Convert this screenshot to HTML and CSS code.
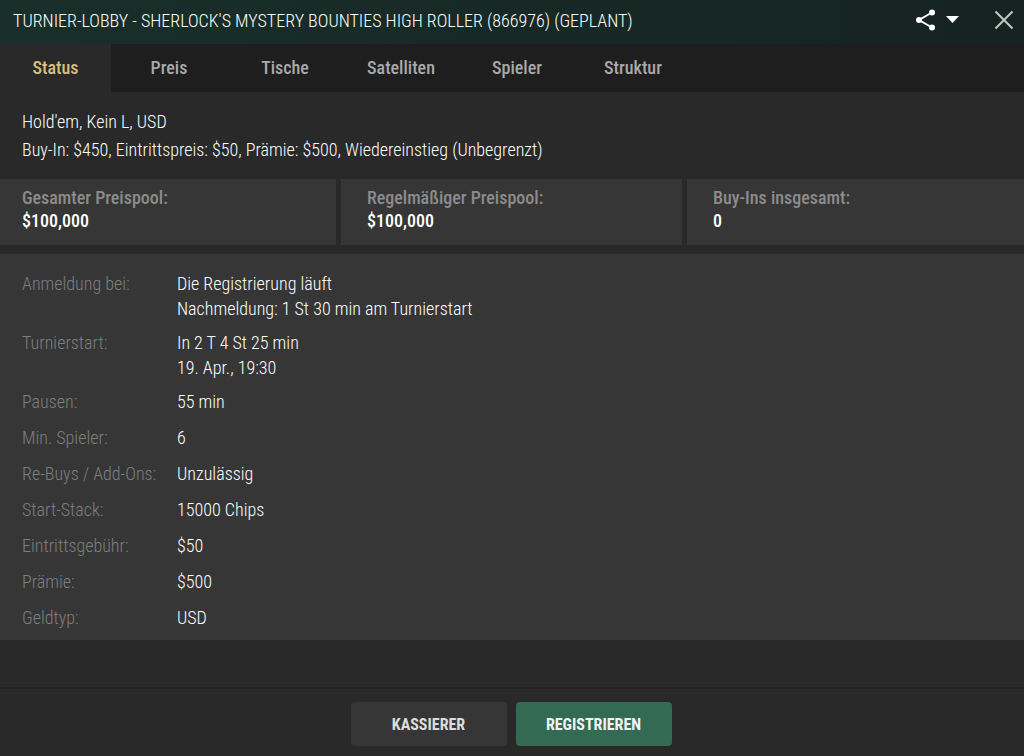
FILE: index.html
```
<!DOCTYPE html>
<html lang="de">
<head>
    <meta charset="UTF-8">
    <meta name="viewport" content="width=device-width, initial-scale=1">
    <title>Turnier-Lobby</title>
    <link rel="stylesheet" href="styles.css">
</head>

<body>

<div class="lobby">
    <header class="titlebar">
        <h1>TURNIER-LOBBY - SHERLOCK'S MYSTERY BOUNTIES HIGH ROLLER (866976) (GEPLANT)</h1>
        <button class="share" type="button" aria-label="Teilen">
            <svg width="44" height="22" viewBox="0 0 44 22">
                <path d="M17 3.5L4 11l13 7.5" fill="none" stroke="#fff" stroke-width="2"/>
                <circle cx="17" cy="3.500" r="3" fill="#fff"/>
                <circle cx="4" cy="11" r="3" fill="#fff"/>
                <circle cx="17" cy="18.500" r="3" fill="#fff"/>
                <path d="M31 7h13l-6.500 7z" fill="#fff"/>
            </svg>
        </button>
        <button class="close" type="button" aria-label="Schließen">
            <svg width="20" height="20" viewBox="0 0 20 20">
                <path d="M1.500 1.500l17 17M18.500 1.500l-17 17" fill="none" stroke="#c3c8c6" stroke-width="2"/>
            </svg>
        </button>
    </header>

    <nav class="tabs">
        <a class="current" href="#status">Status</a>
        <a href="#preis">Preis</a>
        <a href="#tische">Tische</a>
        <a href="#satelliten">Satelliten</a>
        <a href="#spieler">Spieler</a>
        <a href="#struktur">Struktur</a>
    </nav>

    <main id="status">
        <div class="summary">
            <p>Hold'em, Kein L, USD</p>
            <p>Buy-In: $450, Eintrittspreis: $50, Prämie: $500, Wiedereinstieg (Unbegrenzt)</p>
        </div>

        <div class="pools">
            <div class="pool">
                <h2>Gesamter Preispool:</h2>
                <strong>$100,000</strong>
            </div>
            <div class="pool">
                <h2>Regelmäßiger Preispool:</h2>
                <strong>$100,000</strong>
            </div>
            <div class="pool">
                <h2>Buy-Ins insgesamt:</h2>
                <strong>0</strong>
            </div>
        </div>

        <dl class="details">
            <div><dt>Anmeldung bei:</dt><dd>Die Registrierung läuft<br>Nachmeldung: 1 St 30 min am Turnierstart</dd></div>
            <div><dt>Turnierstart:</dt><dd>In 2 T 4 St 25 min<br>19. Apr., 19:30</dd></div>
            <div><dt>Pausen:</dt><dd>55 min</dd></div>
            <div><dt>Min. Spieler:</dt><dd>6</dd></div>
            <div><dt>Re-Buys / Add-Ons:</dt><dd>Unzulässig</dd></div>
            <div><dt>Start-Stack:</dt><dd>15000 Chips</dd></div>
            <div><dt>Eintrittsgebühr:</dt><dd>$50</dd></div>
            <div><dt>Prämie:</dt><dd>$500</dd></div>
            <div><dt>Geldtyp:</dt><dd>USD</dd></div>
        </dl>
    </main>

    <footer class="actions">
        <button type="button">KASSIERER</button>
        <button class="primary" type="button">REGISTRIEREN</button>
    </footer>
</div>

</body>
</html>
```
FILE: styles.css
```
*{
    margin:0;
    padding:0;
    box-sizing: border-box;
}
body{
    background: #292929;
    color: #fff;
    font: 360 18px/25px "Roboto Condensed", "Liberation Sans Narrow", Roboto, sans-serif;
}
button{
    border: 0;
    font: inherit;
    cursor: pointer;
}
svg{
    display: block;
}
.lobby{
    min-height: 100vh;
    display: flex;
    flex-direction: column;
}
.titlebar{
    display: flex;
    align-items: center;
    min-height: 44px;
    padding: 0 10px 4px 13px;
    background: linear-gradient(90deg, #192f2a, #152321);
}
.titlebar h1{
    flex: 1;
    font-size: 18px;
    font-weight: 360;
}
.titlebar button{
    background: none;
}
.close{
    margin-left: 35px;
}
.tabs{
    display: flex;
    background: #1e1e1e;
}
.tabs a{
    width: 116px;
    line-height: 48px;
    text-align: center;
    text-decoration: none;
    font-weight: 480;
    color: #a9a9a9;
}
.tabs .current{
    width: 111px;
    background: #292929;
    color: #d8c07e;
}
.summary{
    padding: 16px 22px 15px;
    line-height: 28px;
}
.pools{
    display: grid;
    grid-template-columns: 336fr 341fr 337fr;
    gap: 5px;
    margin-bottom: 9px;
}
.pool{
    padding: 7px 26px 13px;
    background: #363636;
    line-height: 23px;
}
.pool:first-child{
    padding-left: 22px;
}
.pool h2{
    font-size: 18px;
    font-weight: 480;
    color: #8c8c8c;
}
.pool strong{
    font-weight: 500;
}
.details{
    display: flex;
    flex-direction: column;
    gap: 9px;
    padding: 17px 22px 8px;
    background: #363636;
}
.details div{
    display: grid;
    grid-template-columns: 155px 1fr;
    min-height: 27px;
}
.details dt{
    color: #7e7e7e;
}
.actions{
    display: flex;
    justify-content: center;
    gap: 9px;
    margin-top: auto;
    padding: 13px 2px 10px 0;
    border-top: 2px solid #222;
}
.actions button{
    width: 156px;
    height: 44px;
    border-radius: 4px;
    background: #363636;
    color: #dcdcdc;
    font-size: 16px;
    font-weight: 700;
}
.actions .primary{
    background: #336a53;
    color: #f2f2f2;
}
```
